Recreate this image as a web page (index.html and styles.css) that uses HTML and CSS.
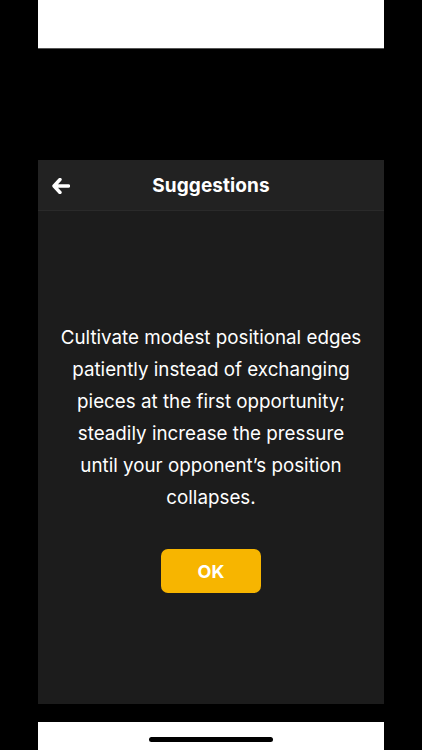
FILE: index.html
```html
<!DOCTYPE html>
<html>
<head>
<meta charset="utf-8">
<link rel="stylesheet" href="styles.css">
</head>
<body>
<div class="screen">
  <div class="top-panel"></div>
  <div class="gap-top"></div>
  <div class="dialog">
    <div class="header">
      <svg class="back" width="18" height="16" viewBox="0 0 18 16">
        <path d="M8 1.5 L2 8 L8 14.5 M2.5 8 H16.5" fill="none" stroke="#fff" stroke-width="3.4" stroke-linecap="round" stroke-linejoin="round"/>
      </svg>
      <div class="title">Suggestions</div>
    </div>
    <div class="body">
      <p class="message">Cultivate modest positional edges patiently instead of exchanging pieces at the first opportunity; steadily increase the pressure until your opponent’s position collapses.</p>
      <button class="ok">OK</button>
    </div>
  </div>
  <div class="gap-bottom"></div>
  <div class="bottom-panel"><div class="home-bar"></div></div>
</div>
</body>
</html>
```
FILE: styles.css
```css
html, body {
  margin: 0;
  padding: 0;
  background: #000;
}
.screen {
  width: 422px;
  height: 750px;
  display: flex;
  flex-direction: column;
  align-items: center;
  overflow: hidden;
  font-family: Inter, Roboto, "Liberation Sans", sans-serif;
}
.top-panel {
  width: 346px;
  height: 48px;
  background: #fff;
  border-bottom: 1px solid #555;
  flex: none;
}
.gap-top {
  height: 111px;
  flex: none;
}
.dialog {
  width: 346px;
  height: 544px;
  background: #1c1c1c;
  display: flex;
  flex-direction: column;
  flex: none;
}
.header {
  height: 50px;
  background: #222;
  border-bottom: 1px solid #2a2a2a;
  display: flex;
  align-items: center;
  justify-content: center;
  position: relative;
  flex: none;
}
.back {
  position: absolute;
  left: 14px;
  top: 18px;
}
.title {
  color: #fff;
  font-weight: 700;
  font-size: 19px;
  letter-spacing: 0.1px;
}
.body {
  flex: 1;
  display: flex;
  flex-direction: column;
  align-items: center;
  justify-content: center;
}
.message {
  margin: 0;
  width: 302px;
  color: #fff;
  font-size: 18.8px;
  line-height: 32px;
  text-align: center;
}
.ok {
  margin-top: 35px;
  width: 100px;
  height: 44px;
  border: none;
  border-radius: 7px;
  background: #f7b500;
  color: #fff;
  font-family: inherit;
  font-weight: 700;
  font-size: 18px;
  padding: 0;
}
.gap-bottom {
  height: 18px;
  flex: none;
}
.bottom-panel {
  width: 346px;
  height: 28px;
  background: #fff;
  flex: none;
  display: flex;
  justify-content: center;
}
.home-bar {
  margin-top: 15px;
  width: 124px;
  height: 5px;
  border-radius: 3px;
  background: #000;
}
```
